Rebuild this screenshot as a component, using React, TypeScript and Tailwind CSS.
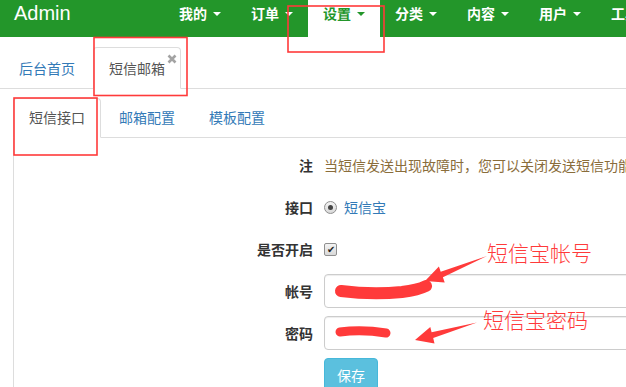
const navItems = ['我的', '订单', '设置', '分类', '内容', '用户', '工具']

const RED = '#ff3a3a'

function Caret({ active }: { active: boolean }) {
  return (
    <span
      className={`ml-[6px] mt-[9px] h-0 w-0 border-x-[4px] border-t-[4px] border-x-transparent ${
        active ? 'border-t-[#23962a]' : 'border-t-white'
      }`}
    />
  )
}

function Row({ label, children }: { label: string; children: React.ReactNode }) {
  return (
    <div className="flex h-[34px] items-center">
      <div className="w-[299px] shrink-0 text-right font-bold leading-[20px] text-[#333]">{label}</div>
      <div className="flex items-center pl-[11px]">{children}</div>
    </div>
  )
}

function Annotations() {
  return (
    <>
      <svg className="pointer-events-none absolute left-0 top-0" width="626" height="387" viewBox="0 0 626 387">
        {/* boxes */}
        <rect x="288" y="6" width="96" height="46" fill="none" stroke={RED} strokeWidth="1.6" />
        <rect x="94" y="37.5" width="93" height="58" fill="none" stroke={RED} strokeWidth="1.6" />
        <rect x="14" y="98" width="83" height="57" fill="none" stroke={RED} strokeWidth="1.6" />
        {/* scribbles */}
        <path d="M341 291 Q 372 295 402 292 Q 418 290 426 286" fill="none" stroke={RED} strokeWidth="12" strokeLinecap="round" />
        <path d="M340 332 Q 362 329 386 333" fill="none" stroke={RED} strokeWidth="9" strokeLinecap="round" />
        {/* arrows */}
        <polygon points="487,256 442.9,277.3 444.7,282.5 425,281 438.9,266.5 440.7,271.7" fill={RED} />
        <polygon points="477,322.5 433.2,338.1 434.5,343.4 415,340 430.3,327 431.6,332.3" fill={RED} />
      </svg>
      <span className="absolute left-[487px] top-[242px] text-[21px] font-light leading-[21px] text-[#ff3a3a]">短信宝帐号</span>
      <span className="absolute left-[483px] top-[309px] text-[21px] font-light leading-[21px] text-[#ff3a3a]">短信宝密码</span>
    </>
  )
}

export default function App() {
  return (
    <div className="relative h-[387px] w-[626px] overflow-hidden bg-white font-['Noto_Sans_CJK_SC',sans-serif] text-[14px] text-[#333]">
      {/* top navbar */}
      <div className="flex h-[37px] bg-[#23962a]">
        <div className="w-[164px] shrink-0 pl-[14px] pt-[3px] font-['Liberation_Sans',sans-serif] text-[20px] leading-[20px] text-white">
          Admin
        </div>
        {navItems.map((item) => {
          const active = item === '设置'
          return (
            <div
              key={item}
              className={`flex h-[37px] shrink-0 items-start px-[15px] pt-[3px] font-bold ${
                active ? 'bg-white text-[#23962a]' : 'text-white'
              }`}
            >
              <span className="leading-[20px]">{item}</span>
              <Caret active={active} />
            </div>
          )
        })}
      </div>

      {/* page tabs */}
      <div className="flex border-b border-[#ddd] pl-[3px] pt-[10px]">
        <div className="mr-[2px] w-[88px] shrink-0 px-[16px] pb-[10px] pt-[11px] leading-[20px] text-[#337ab7]">后台首页</div>
        <div className="relative -mb-px w-[88px] shrink-0 rounded-t-[4px] border border-[#ddd] border-b-white bg-white px-[15px] py-[10px] leading-[20px] text-[#555]">
          短信邮箱
          <svg className="absolute right-[3px] top-[6px]" width="10" height="10" viewBox="0 0 10 10">
            <path d="M1.5 1.5 L8.5 8.5 M8.5 1.5 L1.5 8.5" stroke="#a3a3a3" strokeWidth="2.6" />
          </svg>
        </div>
      </div>

      {/* settings tabs */}
      <div className="ml-[13px] mt-[9px] w-[900px]">
        <div className="flex border-b border-[#ddd]">
          <div className="-mb-px mr-[2px] w-[88px] shrink-0 rounded-t-[4px] border border-[#ddd] border-b-white bg-white px-[15px] pb-[10px] pt-[8px] leading-[20px] text-[#555]">
            短信接口
          </div>
          <div className="mr-[2px] w-[88px] shrink-0 px-[16px] pb-[10px] pt-[9px] leading-[20px] text-[#337ab7]">邮箱配置</div>
          <div className="mr-[2px] w-[88px] shrink-0 px-[16px] pb-[10px] pt-[9px] leading-[20px] text-[#337ab7]">模板配置</div>
        </div>

        <div className="flex h-[260px] flex-col gap-[8px] border-l border-[#ddd] pt-[10px]">
          <Row label="注">
            <span className="whitespace-nowrap leading-[20px] text-[#8a6d3b]">
              当短信发送出现故障时<span className="inline-block w-[14px] text-center">，</span>您可以关闭发送短信功能，系统将不再发送短信
            </span>
          </Row>
          <Row label="接口">
            <span className="flex h-[13px] w-[13px] items-center justify-center rounded-full border border-[#8f8f8f] bg-gradient-to-b from-[#f4f4f4] to-[#d8d8d8]">
              <span className="h-[5px] w-[5px] rounded-full bg-[#444]" />
            </span>
            <span className="ml-[7px] leading-[20px] text-[#337ab7]">短信宝</span>
          </Row>
          <Row label="是否开启">
            <span className="flex h-[13px] w-[13px] items-center justify-center rounded-[2px] border border-[#8f8f8f] bg-gradient-to-b from-[#f4f4f4] to-[#d8d8d8] text-[10px] leading-none text-[#222]">
              ✔
            </span>
          </Row>
          <Row label="帐号">
            <div className="h-[34px] w-[420px] rounded-[4px] border border-[#ccc] bg-white shadow-[inset_0_1px_1px_rgba(0,0,0,0.075)]" />
          </Row>
          <Row label="密码">
            <div className="h-[34px] w-[420px] rounded-[4px] border border-[#ccc] bg-white shadow-[inset_0_1px_1px_rgba(0,0,0,0.075)]" />
          </Row>
          <Row label="">
            <button className="h-[34px] rounded-[4px] border border-[#46b8da] bg-[#5bc0de] px-[12px] leading-[20px] text-white">
              保存
            </button>
          </Row>
        </div>
      </div>

      <Annotations />
    </div>
  )
}
